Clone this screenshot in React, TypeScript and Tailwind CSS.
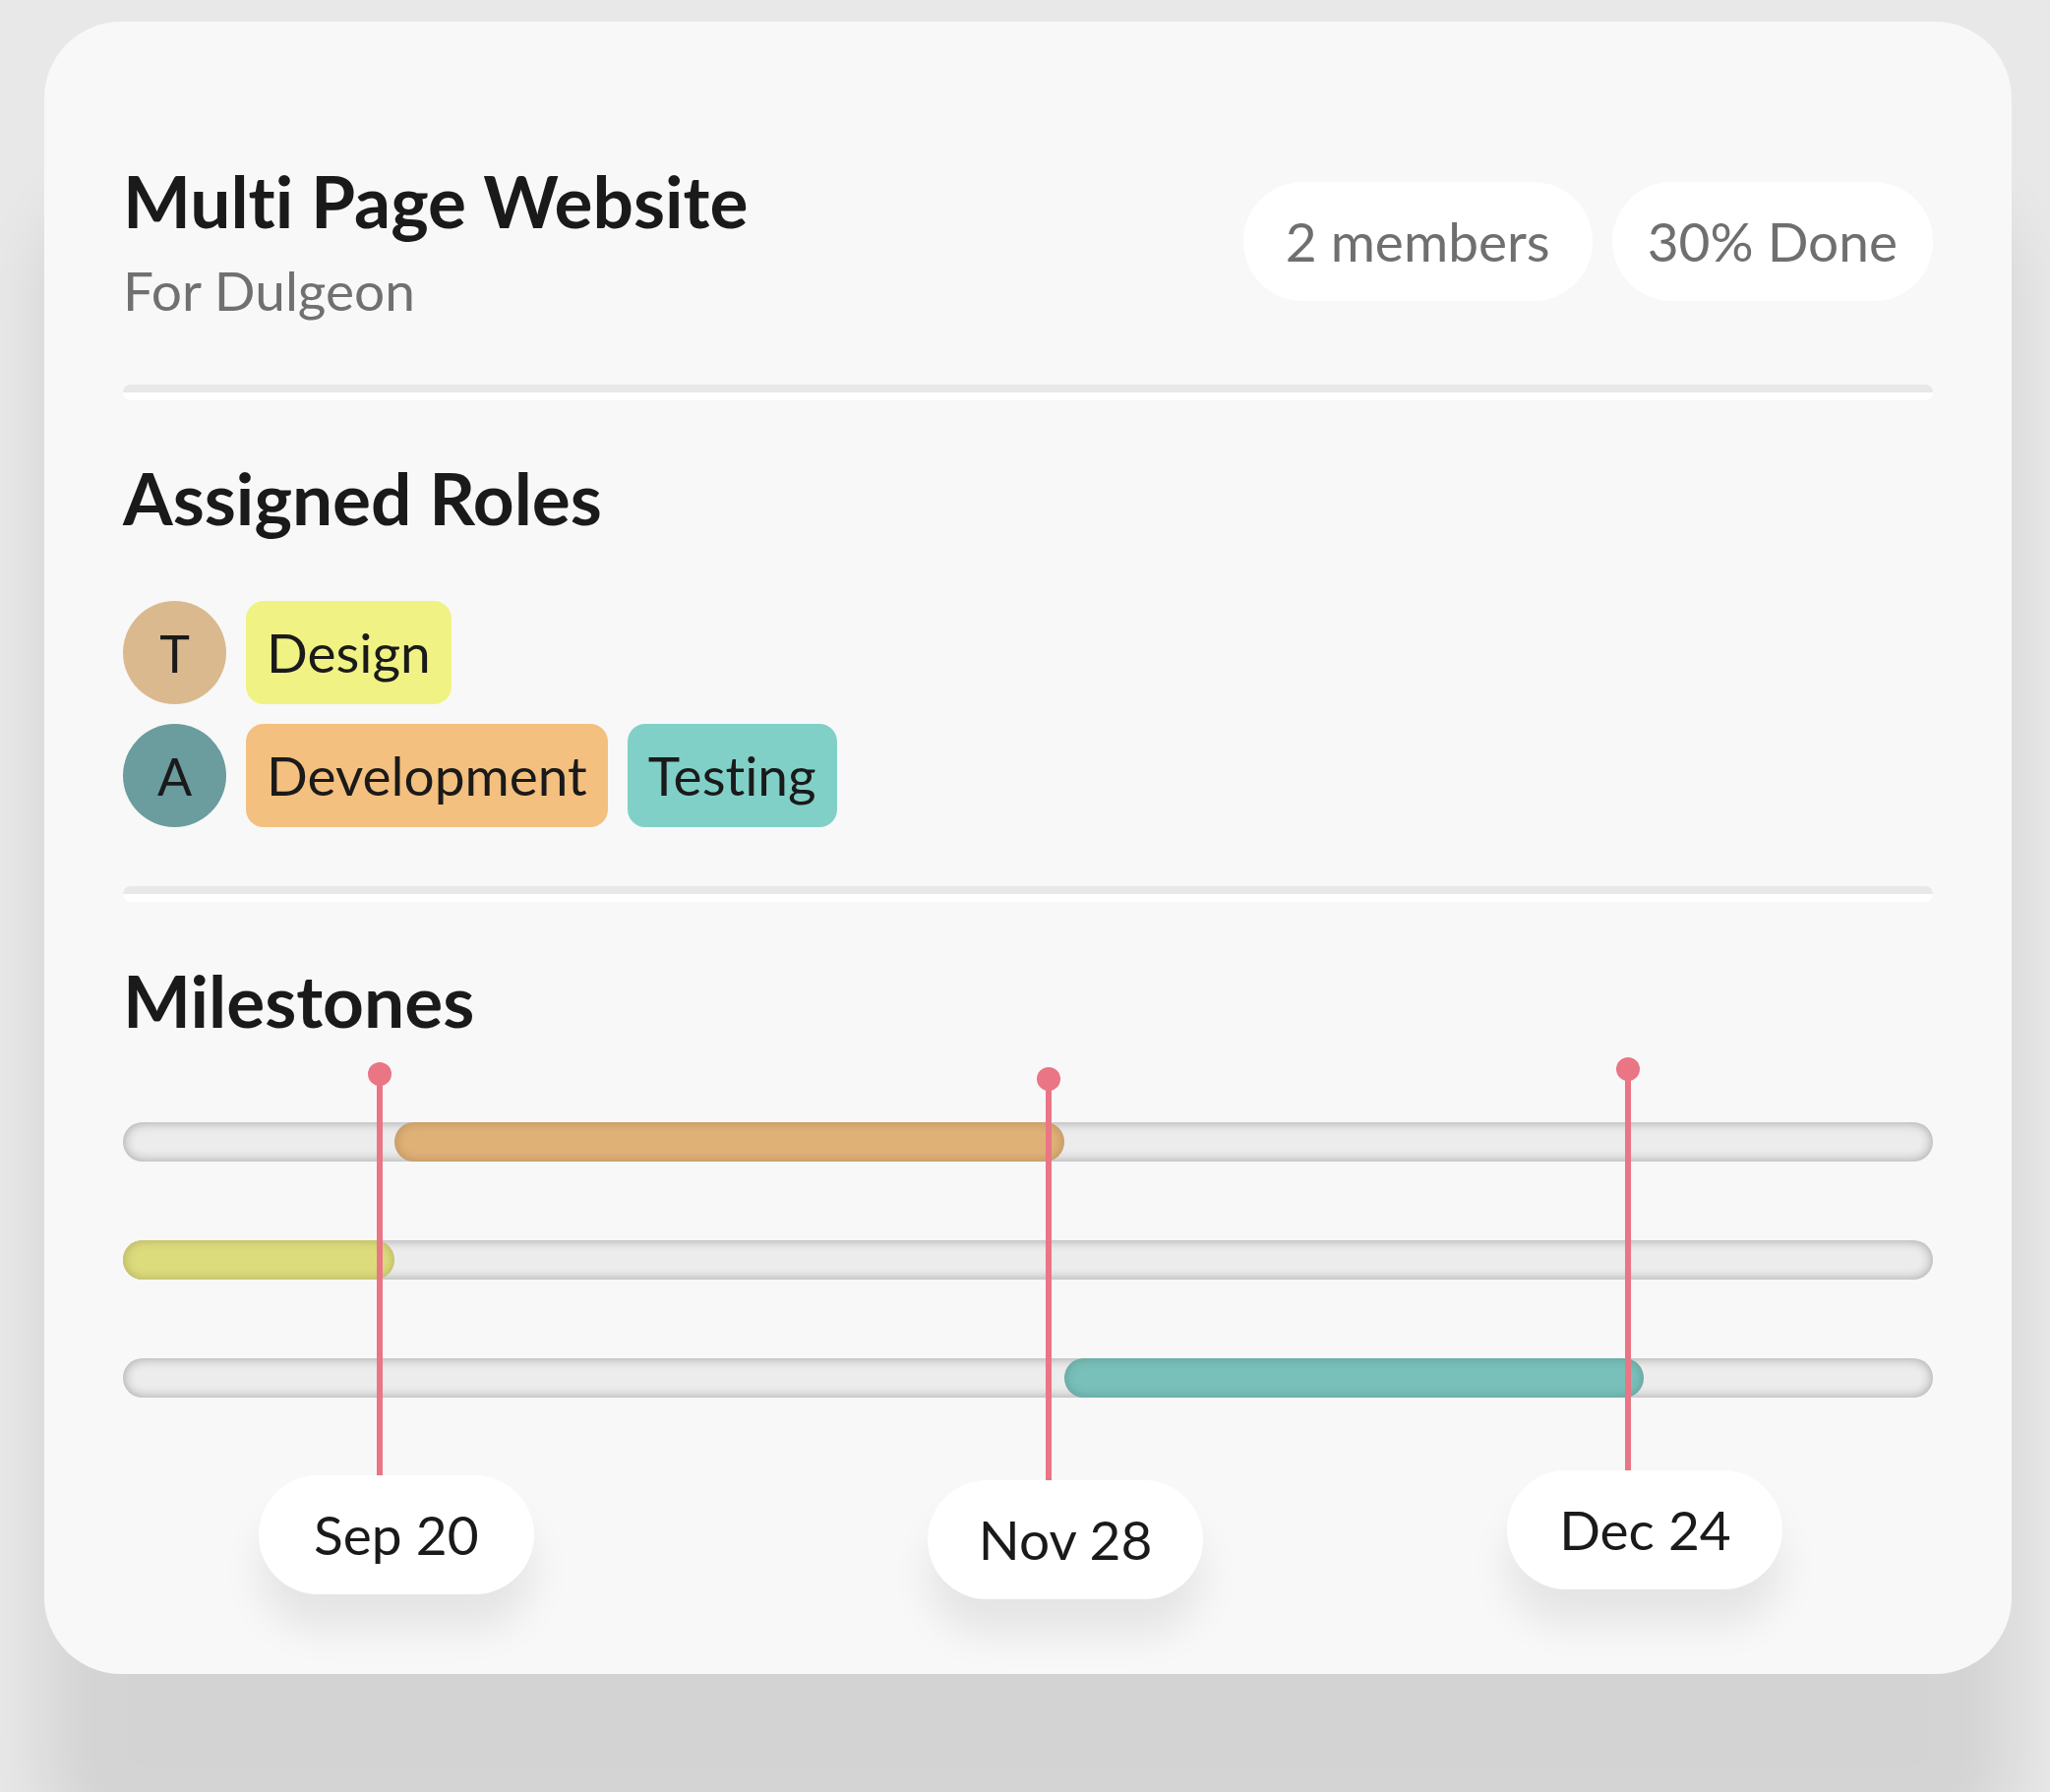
import React from 'react';

type Bar = { color: string; from: number; to: number };
type Milestone = { label: string; pos: number; top: number };

const bars: Bar[] = [
  { color: 'bg-[#e0b177]', from: 15, to: 52 },
  { color: 'bg-[#dddc7c]', from: 0, to: 15 },
  { color: 'bg-[#79c0ba]', from: 52, to: 84 },
];

const milestones: Milestone[] = [
  { label: 'Sep 20', pos: 15.1, top: 15 },
  { label: 'Nov 28', pos: 52.07, top: 20 },
  { label: 'Dec 24', pos: 84.1, top: 10 },
];

function Divider() {
  return (
    <div className="flex flex-col rounded-full overflow-hidden">
      <div className="h-[8px] bg-[#e8e8e8]" />
      <div className="h-[8px] bg-white" />
    </div>
  );
}

function Tag({ text, color }: { text: string; color: string }) {
  return (
    <span className={`h-[105px] px-[21px] rounded-[18px] flex items-center text-[55px] leading-none text-[#1a1a1a] ${color}`}>
      {text}
    </span>
  );
}

function Avatar({ letter, color }: { letter: string; color: string }) {
  return (
    <span className={`w-[105px] h-[105px] rounded-full flex items-center justify-center text-[52px] leading-none text-[#1a1a1a] ${color}`}>
      {letter}
    </span>
  );
}

export default function App() {
  return (
    <div className="min-h-screen bg-[#e8e8e8] pl-[45px] pt-[22px] font-['Lato',sans-serif] [font-variant-ligatures:none] overflow-hidden">
      <div className="w-[2000px] bg-[#f8f8f8] rounded-[78px] px-[80px] pt-[146px] pb-[71px] shadow-[0_180px_70px_0_rgba(0,0,0,0.09)]">
        {/* header */}
        <div className="flex items-center justify-between">
          <div>
            <h1 className="text-[73px] leading-none font-bold text-[#1a1a1a]">Multi Page Website</h1>
            <p className="mt-[27px] text-[55px] leading-none text-[#707070]">For Dulgeon</p>
          </div>
          <div className="flex gap-[20px]">
            <span className="h-[121px] px-[43px] rounded-full bg-white flex items-center text-[55px] leading-none text-[#6f6f6f]">2 members</span>
            <span className="h-[121px] px-[36px] rounded-full bg-white flex items-center text-[55px] leading-none text-[#6f6f6f]">30% Done</span>
          </div>
        </div>

        <div className="mt-[68px]">
          <Divider />
        </div>

        {/* roles */}
        <h2 className="mt-[63px] text-[73px] leading-none font-bold text-[#1a1a1a]">Assigned Roles</h2>
        <div className="mt-[68px] flex flex-col gap-[20px]">
          <div className="flex gap-[20px]">
            <Avatar letter="T" color="bg-[#dab98f]" />
            <Tag text="Design" color="bg-[#f0f384]" />
          </div>
          <div className="flex gap-[20px]">
            <Avatar letter="A" color="bg-[#6b9c9e]" />
            <Tag text="Development" color="bg-[#f4c07f]" />
            <Tag text="Testing" color="bg-[#80d0c8]" />
          </div>
        </div>

        <div className="mt-[60px]">
          <Divider />
        </div>

        {/* milestones */}
        <h2 className="mt-[64px] text-[73px] leading-none font-bold text-[#1a1a1a]">Milestones</h2>
        <div className="relative mt-[11px] pt-[76px] pb-[210px]">
          <div className="flex flex-col gap-[80px]">
            {bars.map((b, i) => (
              <div key={i} className="relative h-[40px] rounded-full bg-[#ececec] shadow-[inset_0_0_12px_rgba(0,0,0,0.32)]">
                <div
                  className={`absolute top-0 h-[40px] rounded-full ${b.color} shadow-[inset_0_0_12px_rgba(0,0,0,0.2)]`}
                  style={{ left: `${b.from}%`, width: `${b.to - b.from}%` }}
                />
              </div>
            ))}
          </div>

          {milestones.map((m) => (
            <div
              key={m.label}
              className="absolute w-[280px] flex flex-col"
              style={{ left: `calc(${m.pos}% - 140px)`, top: m.top }}
            >
              <div className="ml-[111px] w-[24px] h-[24px] rounded-full bg-[#e97585]" />
              <div className="ml-[120px] w-[6px] h-[408px] -mt-[12px] bg-[#e97585]" />
              <div className="h-[121px] rounded-full bg-white flex items-center justify-center text-[55px] leading-none text-[#1a1a1a] shadow-[0_36px_40px_rgba(0,0,0,0.08)]">
                {m.label}
              </div>
            </div>
          ))}
        </div>
      </div>
    </div>
  );
}
